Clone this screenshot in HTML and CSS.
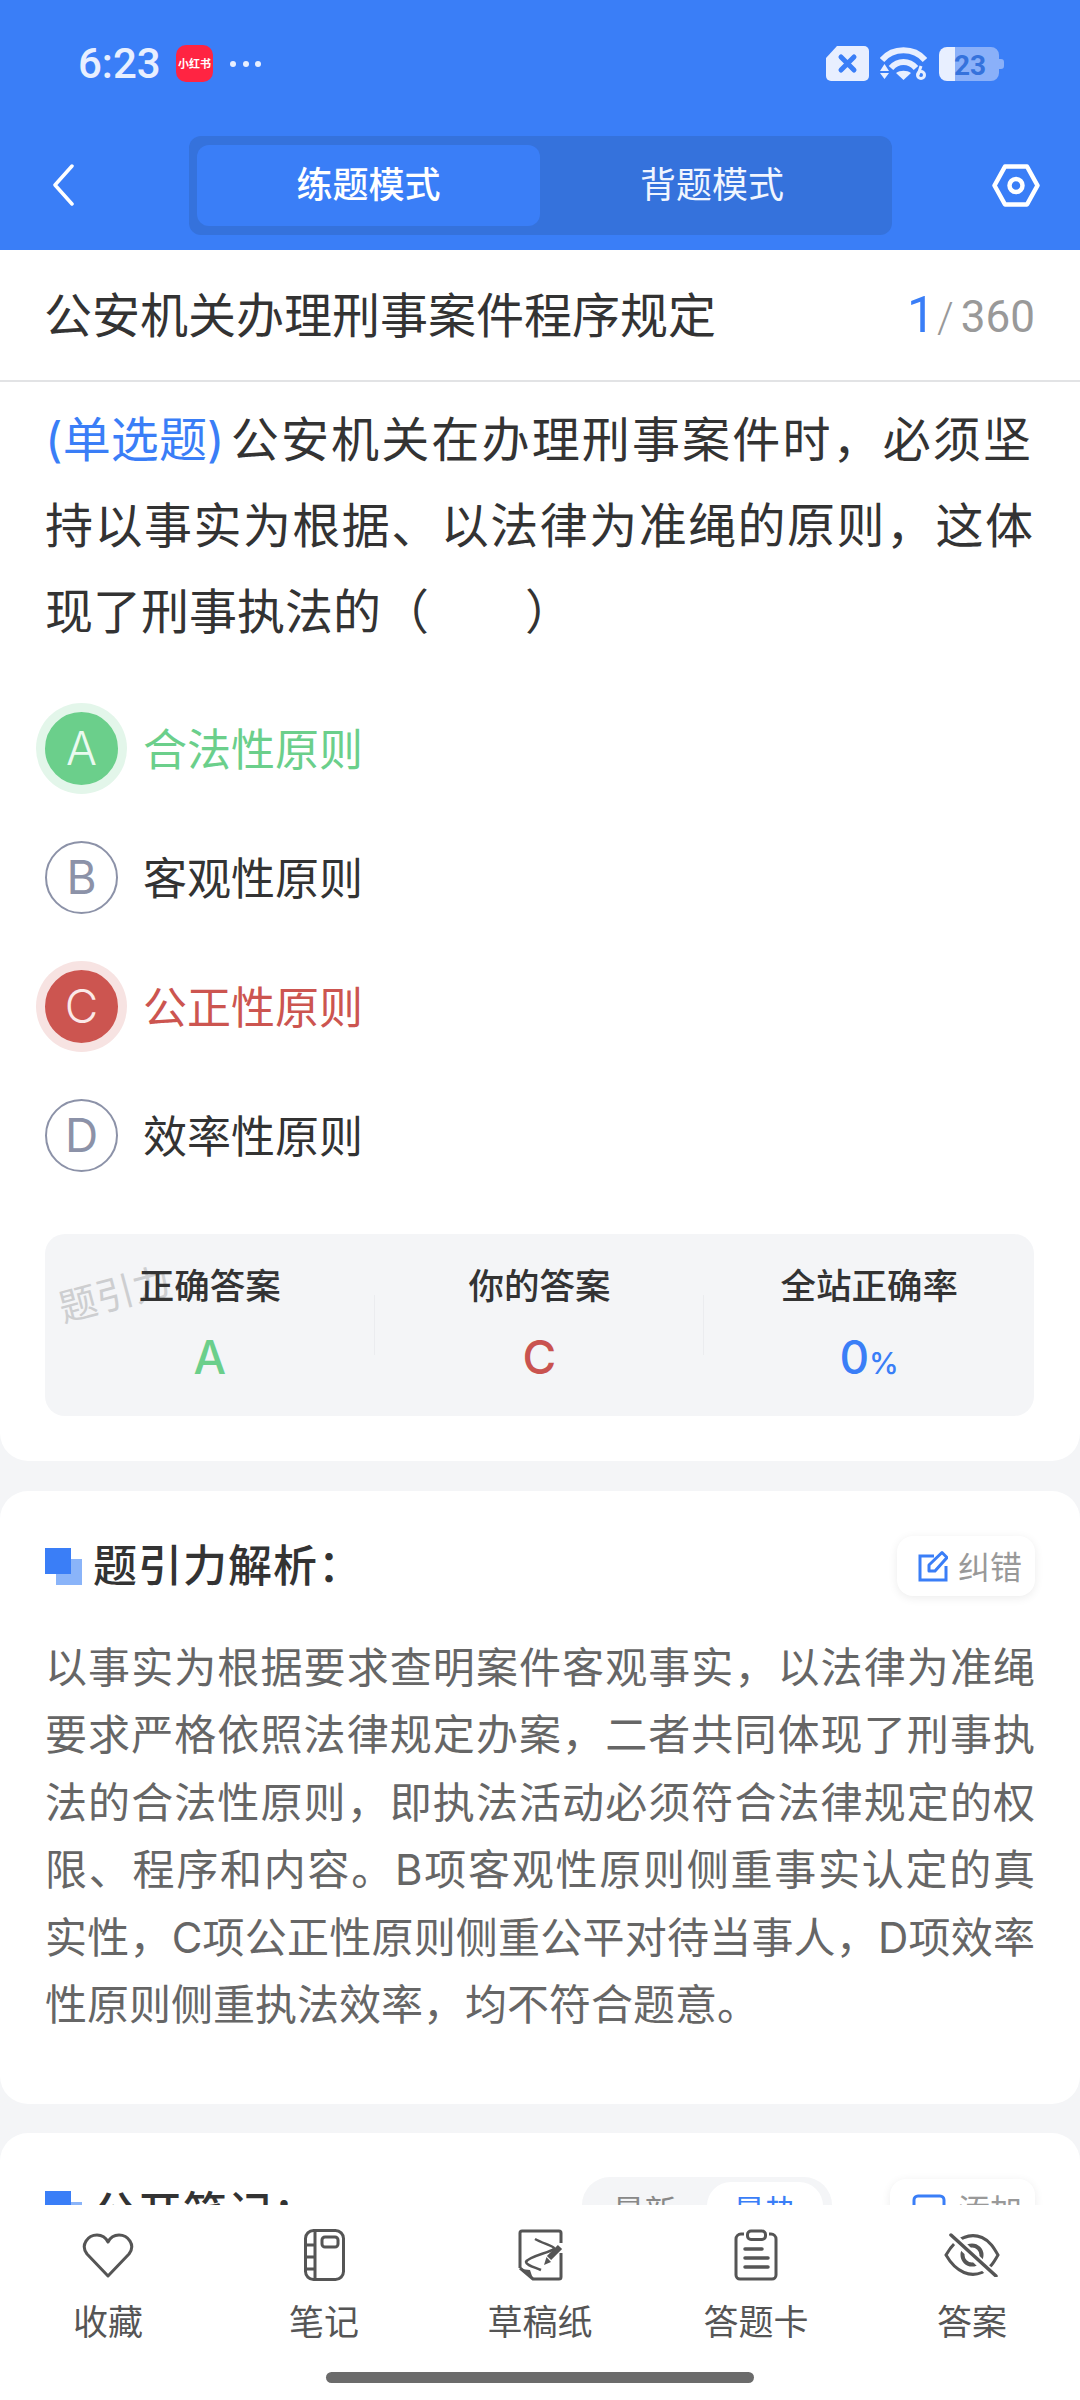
FILE: index.html
```html
<!DOCTYPE html>
<html lang="zh-CN">
<head>
<meta charset="utf-8">
<title>练题模式</title>
<link rel="stylesheet" href="styles.css">
</head>
<body>
<div class="page">
  <header class="header">
    <div class="status">
      <div class="status-left">
        <span class="time">6:23</span>
        <span class="app-badge">小红书</span>
        <span class="dots"><i></i><i></i><i></i></span>
      </div>
      <div class="status-right">
        <svg class="ic-sim" viewBox="0 0 43 35"><path d="M11 0H38a5 5 0 0 1 5 5V30a5 5 0 0 1-5 5H5a5 5 0 0 1-5-5V12Z" fill="#e8efff"/><path d="M15 11L28 24M28 11L15 24" stroke="#3a7ef7" stroke-width="5" stroke-linecap="round"/></svg>
        <svg class="ic-wifi" viewBox="0 0 47 35"><path d="M2 14C13 1 34 1 45 14" fill="none" stroke="#e8efff" stroke-width="6"/><path d="M11 22C18 14 29 14 36 22" fill="none" stroke="#e8efff" stroke-width="6"/><path d="M16 27C20 24 27 24 31 27L23.500 34Z" fill="#e8efff"/><path d="M4.500 18L9 25H0ZM0 27H9L4.500 33Z" fill="#e8efff"/><circle cx="41" cy="29" r="3.500" fill="none" stroke="#e8efff" stroke-width="3"/><path d="M38 29L41 20" stroke="#e8efff" stroke-width="3"/></svg>
        <svg class="ic-batt" viewBox="0 0 65 34"><path d="M16 0H52a8 8 0 0 1 8 8v4h2a3 3 0 0 1 3 3v4a3 3 0 0 1-3 3h-2v4a8 8 0 0 1-8 8H16Z" fill="#8ab0f9"/><path d="M8 0H16V34H8a8 8 0 0 1-8-8V8a8 8 0 0 1 8-8Z" fill="#e8efff"/><text x="31" y="28" text-anchor="middle" class="batt-num">23</text></svg>
      </div>
    </div>
    <nav class="nav">
      <svg class="ic-back" viewBox="0 0 22 42"><path d="M20 2L3 21L20 40" fill="none" stroke="#fff" stroke-width="3.500" stroke-linecap="round" stroke-linejoin="round"/></svg>
      <div class="tabs">
        <div class="tab tab-on">练题模式</div>
        <div class="tab">背题模式</div>
      </div>
      <svg class="ic-hex" viewBox="0 0 48 43"><path d="M13 2.500H35L45.500 21.500L35 40.500H13L2.500 21.500Z" fill="none" stroke="#fff" stroke-width="4.500" stroke-linejoin="round"/><circle cx="24" cy="21.500" r="6.500" fill="none" stroke="#fff" stroke-width="4.500"/></svg>
    </nav>
  </header>

  <main class="main">
    <section class="card card-q">
      <div class="title-row">
        <h1 class="title">公安机关办理刑事案件程序规定</h1>
        <div class="counter"><span class="cur">1</span><span class="slash">/</span><span class="total">360</span></div>
      </div>
      <p class="question"><span class="q-type">(单选题)</span>公安机关在办理刑事案件时，必须坚持以事实为根据、以法律为准绳的原则，这体现了刑事执法的（　　）</p>
      <ul class="options">
        <li class="opt opt-right"><span class="mark">A</span><span class="opt-text">合法性原则</span></li>
        <li class="opt"><span class="mark">B</span><span class="opt-text">客观性原则</span></li>
        <li class="opt opt-wrong"><span class="mark">C</span><span class="opt-text">公正性原则</span></li>
        <li class="opt"><span class="mark">D</span><span class="opt-text">效率性原则</span></li>
      </ul>
      <div class="stats">
        <span class="watermark">题引力</span>
        <div class="stat"><div class="stat-label">正确答案</div><div class="stat-val val-right">A</div></div>
        <div class="stat"><div class="stat-label">你的答案</div><div class="stat-val val-wrong">C</div></div>
        <div class="stat"><div class="stat-label">全站正确率</div><div class="stat-val val-rate">0<small>%</small></div></div>
      </div>
    </section>

    <section class="card card-a">
      <div class="sec-head">
        <span class="sec-mark"></span>
        <h2 class="sec-title">题引力解析：</h2>
        <div class="chip">
          <svg class="ic-edit" viewBox="0 0 30 32"><path d="M16 6H2V30H28V16" fill="none" stroke="#3a7ef7" stroke-width="3"/><path d="M11 21V15L24 2.500L29 7.500L17 21Z" fill="none" stroke="#3a7ef7" stroke-width="3" stroke-linejoin="round"/></svg>
          <span class="chip-text">纠错</span>
        </div>
      </div>
      <p class="analysis">以事实为根据要求查明案件客观事实，以法律为准绳要求严格依照法律规定办案，二者共同体现了刑事执法的合法性原则，即执法活动必须符合法律规定的权限、程序和内容。B项客观性原则侧重事实认定的真实性，C项公正性原则侧重公平对待当事人，D项效率性原则侧重执法效率，均不符合题意。</p>
    </section>

    <section class="card card-n">
      <div class="sec-head">
        <span class="sec-mark"></span>
        <h2 class="sec-title">公开笔记：</h2>
        <div class="toggle"><span class="tg">最新</span><span class="tg tg-on">最热</span></div>
        <div class="chip chip-add">
          <svg class="ic-add" viewBox="0 0 34 30"><rect x="2" y="2" width="30" height="26" rx="4" fill="none" stroke="#3a7ef7" stroke-width="3"/><path d="M11 13H23" stroke="#3a7ef7" stroke-width="3"/></svg>
          <span class="chip-text">添加</span>
        </div>
      </div>
    </section>
  </main>

  <footer class="footer">
    <div class="tools">
      <div class="tool">
        <div class="tool-ic"><svg class="i-heart" viewBox="0 0 52 45"><path d="M26 43L5 21C-2 12 6 2 15 2C20 2 24 5 26 9C28 5 32 2 37 2C46 2 54 12 47 21Z" fill="none" stroke="#555" stroke-width="3" stroke-linejoin="round"/></svg></div>
        <span class="tool-label">收藏</span>
      </div>
      <div class="tool">
        <div class="tool-ic"><svg class="i-note" viewBox="0 0 41 52"><rect x="1.500" y="1.500" width="38" height="49" rx="8" fill="none" stroke="#555" stroke-width="3"/><path d="M11 2V50M2 16H11M2 28H11M2 40H11" stroke="#555" stroke-width="3" fill="none"/><rect x="18" y="8" width="16" height="10" rx="3" fill="none" stroke="#555" stroke-width="3"/></svg></div>
        <span class="tool-label">笔记</span>
      </div>
      <div class="tool">
        <div class="tool-ic"><svg class="i-sketch" viewBox="0 0 45 52"><path d="M2 39V4a2 2 0 0 1 2-2H41a2 2 0 0 1 2 2V14M43 24V48a2 2 0 0 1-2 2H15L2 39" fill="none" stroke="#555" stroke-width="3" stroke-linejoin="round"/><path d="M3 40L12 41L15 50Z" fill="#555"/><path d="M17 10C24 14 35 17 36 19C36 23 10 27 8 33C8 36 16 38 23 41" fill="none" stroke="#555" stroke-width="2.500"/><path d="M42 18L31 29" stroke="#555" stroke-width="6"/><path d="M28.500 28L33 33L26 36Z" fill="#555"/></svg></div>
        <span class="tool-label">草稿纸</span>
      </div>
      <div class="tool">
        <div class="tool-ic"><svg class="i-clip" viewBox="0 0 44 52"><path d="M10 5H7a5 5 0 0 0-5 5V46a4 4 0 0 0 4 4H38a4 4 0 0 0 4-4V10a5 5 0 0 0-5-5H35" fill="none" stroke="#555" stroke-width="3"/><rect x="13.500" y="2" width="18" height="8.500" rx="3.500" fill="none" stroke="#555" stroke-width="3"/><path d="M11 20H28M11 29H34M11 38H34" stroke="#555" stroke-width="3.500" stroke-linecap="round"/></svg></div>
        <span class="tool-label">答题卡</span>
      </div>
      <div class="tool">
        <div class="tool-ic"><svg class="i-eye" viewBox="0 0 56 44"><path d="M2 22C6 15 12 7 20 4.500C26 2 32 2 38 4.500C46 8 50 15 54 22C50 29 46 36 38 39.500C32 42 26 42 20 39.500C12 36 6 29 2 22Z" fill="none" stroke="#555" stroke-width="3"/><circle cx="28" cy="22" r="9.500" fill="none" stroke="#555" stroke-width="4"/><path d="M5 0L52 45" stroke="#fff" stroke-width="9"/><path d="M7 2L52 43" stroke="#555" stroke-width="3.500" stroke-linecap="round"/></svg></div>
        <span class="tool-label">答案</span>
      </div>
    </div>
    <div class="home-bar"></div>
  </footer>
</div>
</body>
</html>
```

FILE: styles.css
```css
* { box-sizing: border-box; }
html, body { margin: 0; padding: 0; }
body {
  width: 1080px;
  height: 2400px;
  background: #f4f5f7;
  color: #333;
  font-family: Inter, "Noto Sans CJK SC", sans-serif;
}
h1, h2, p, ul { margin: 0; padding: 0; font-weight: 400; }
ul { list-style: none; }

.page {
  width: 1080px;
  height: 2400px;
  display: flex;
  flex-direction: column;
  overflow: hidden;
}

/* header */
.header {
  height: 250px;
  flex: none;
  background: #3a7ef7;
  padding-top: 45px;
}
.status {
  height: 37px;
  display: flex;
  justify-content: space-between;
  align-items: center;
  padding: 0 76px 0 78px;
}
.status-left { display: flex; align-items: center; }
.time {
  width: 98px;
  font: 500 42px/37px Roboto, sans-serif;
  color: #e8efff;
}
.app-badge {
  width: 37px;
  height: 37px;
  border-radius: 10px;
  background: #ff2442;
  color: #fff;
  font: 700 11px/37px "Noto Sans CJK SC", sans-serif;
  text-align: center;
  white-space: nowrap;
}
.dots { display: flex; gap: 6.500px; margin-left: 17px; }
.dots i { width: 6px; height: 6px; border-radius: 50%; background: #e8efff; }
.status-right { display: flex; align-items: center; }
.ic-sim { width: 43px; height: 35px; }
.ic-wifi { width: 47px; height: 35px; margin-left: 11px; }
.ic-batt { width: 65px; height: 34px; margin-left: 12px; }
.batt-num { font: 700 28px Roboto, sans-serif; fill: #3572dc; }

.nav {
  height: 99px;
  margin-top: 54px;
  display: flex;
  align-items: center;
  justify-content: space-between;
  padding: 0 40px 0 52px;
}
.ic-back { width: 22px; height: 42px; margin-bottom: 2px; }
.ic-hex { width: 48px; height: 43px; }
.tabs {
  width: 703px;
  height: 99px;
  margin-left: 115px;
  margin-right: 100px;
  flex: none;
  padding: 9px 8px;
  background: #3572dc;
  border-radius: 12px;
  display: grid;
  grid-template-columns: 343px 1fr;
}
.tab {
  border-radius: 12px;
  color: #f0f5ff;
  font-size: 36px;
  line-height: 81px;
  text-align: center;
}
.tab-on { background: #3a7ef7; color: #fff; font-weight: 500; }

/* cards */
.main { flex: 1; min-height: 0; overflow: hidden; }
.card { background: #fff; border-radius: 28px; }
.card-q { border-radius: 0 0 28px 28px; padding-bottom: 45px; }
.card-a { margin-top: 30px; padding: 45px 45px 66px; }
.card-n { margin-top: 29px; padding: 46px 45px 40px; height: 200px; }

.title-row {
  height: 132px;
  border-bottom: 2px solid #e2e3e5;
  display: flex;
  align-items: center;
  justify-content: space-between;
  padding: 0 45px 6px 44px;
}
.title { font-size: 48px; color: #333; }
.counter { display: flex; align-items: baseline; margin-top: 6px; font-family: Roboto, sans-serif; }
.cur { font-size: 50px; color: #3a7ef7; margin-right: 2px; }
.slash { font-size: 42px; color: #999; font-weight: 300; margin-right: 7px; }
.total { font-size: 44px; color: #999; }

.question {
  padding: 15px 47px 0 45px;
  font-size: 48px;
  line-height: 86px;
  text-align: justify;
}
.question::first-line { letter-spacing: 2px; }
.q-type { color: #3a7ef7; letter-spacing: 0; margin-right: 6px; }

.options { margin-top: 29px; }
.opt {
  height: 129px;
  display: flex;
  align-items: center;
  padding-left: 45px;
}
.mark {
  width: 73px;
  height: 73px;
  border-radius: 50%;
  border: 2px solid #8c92a8;
  color: #8c92a8;
  font-size: 46px;
  line-height: 69px;
  text-align: center;
  flex: none;
}
.opt-text { margin-left: 25px; padding-bottom: 4px; font-size: 44px; }
.opt-right .mark {
  background: #6bcf8b;
  border-color: #6bcf8b;
  color: #eafaf0;
  font-weight: 300;
  box-shadow: 0 0 0 9px #e3f6ea;
}
.opt-right .opt-text { color: #6bcf8b; }
.opt-wrong .mark {
  background: #cc5550;
  border-color: #cc5550;
  color: #fbe9e8;
  font-weight: 300;
  box-shadow: 0 0 0 9px #f7e3e2;
}
.opt-wrong .opt-text { color: #cc5550; }

.stats {
  position: relative;
  margin: 34px 46px 0 45px;
  height: 182px;
  background: #f4f5f7;
  border-radius: 20px;
  display: grid;
  grid-template-columns: repeat(3, 1fr);
}
.watermark {
  position: absolute;
  left: 12px;
  top: 30px;
  font-size: 38px;
  color: #cdced0;
  transform: rotate(-15deg);
}
.stat { position: relative; text-align: center; padding-top: 28px; }
.stat + .stat::before {
  content: "";
  position: absolute;
  left: -1px;
  top: 61px;
  height: 60px;
  border-left: 1px solid #ebecef;
}
.stat-label { font-size: 35.500px; line-height: 50px; font-weight: 500; color: #333; }
.stat-val { font-size: 46px; line-height: 58px; margin-top: 16px; font-weight: 500; }
.stat-val small { font-size: 30px; }
.val-right { color: #6bcf8b; }
.val-wrong { color: #c9534f; }
.val-rate { color: #3a7ef7; }

/* section heads */
.sec-head { display: flex; align-items: center; height: 60px; }
.sec-mark {
  position: relative;
  width: 37px;
  height: 37px;
  flex: none;
  margin-right: 11px;
}
.sec-mark::before, .sec-mark::after {
  content: "";
  position: absolute;
  width: 26px;
  height: 26px;
}
.sec-mark::before { right: 0; bottom: 0; background: #8ab4f9; }
.sec-mark::after { left: 0; top: 0; background: #3a7ef7; }
.sec-title {
  flex: 1;
  font-size: 44px;
  font-weight: 500;
  letter-spacing: 1px;
  color: #333;
  line-height: 60px;
}
.card-n .sec-title { padding-top: 8px; }
.chip {
  width: 138px;
  height: 60px;
  border-radius: 16px;
  background: #fff;
  box-shadow: 0 2px 10px rgba(0, 0, 0, .08);
  display: flex;
  align-items: center;
  padding-left: 21px;
  gap: 10px;
  color: #999;
  font-size: 32px;
  flex: none;
}
.chip-text { padding-bottom: 3px; }
.ic-edit { width: 30px; height: 32px; flex: none; }
.ic-add { width: 34px; height: 30px; flex: none; }
.chip-add { width: 145px; margin-left: 58px; padding-left: 22px; gap: 12px; }
.analysis {
  margin-top: 38px;
  font-size: 42px;
  line-height: 67.400px;
  text-align: justify;
  color: #666;
}

.toggle {
  width: 250px;
  height: 64px;
  padding: 5px 9px 0 0;
  border-radius: 28px;
  background: #f4f5f7;
  display: grid;
  grid-template-columns: 125px 116px;
  flex: none;
}
.tg { font-size: 32px; line-height: 59px; text-align: center; color: #888; }
.tg-on { background: #fff; color: #3a7ef7; border-radius: 24px; }

/* footer */
.footer {
  height: 195px;
  flex: none;
  background: #fff;
  position: relative;
}
.tools {
  display: grid;
  grid-template-columns: repeat(5, 216px);
  padding-top: 23px;
}
.tool { display: flex; flex-direction: column; align-items: center; }
.tool-ic { height: 54px; display: flex; align-items: center; justify-content: center; }
.tool-label { margin-top: 15px; font-size: 35px; line-height: 50px; color: #555; }
.i-heart { width: 52px; height: 45px; }
.i-note { width: 41px; height: 52px; }
.i-sketch { width: 45px; height: 52px; }
.i-clip { width: 44px; height: 52px; }
.i-eye { width: 56px; height: 44px; }
.home-bar {
  position: absolute;
  left: 326px;
  top: 167px;
  width: 428px;
  height: 11px;
  border-radius: 6px;
  background: #6b6b6b;
}
```
